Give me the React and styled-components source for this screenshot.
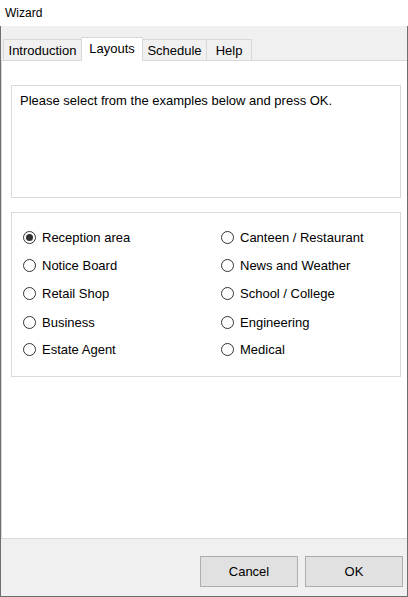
import React, { useState } from "react";
import styled, { createGlobalStyle } from "styled-components";

const Global = createGlobalStyle`
  html, body { margin: 0; padding: 0; background: #ffffff; }
  body { font-family: "Liberation Sans", Arial, sans-serif; font-size: 13px; color: #000; }
  * { box-sizing: border-box; }
`;

const Window = styled.div`
  width: 408px;
  height: 597px;
  display: flex;
  flex-direction: column;
  background: #fff;
`;

const TitleBar = styled.div`
  height: 26px;
  display: flex;
  align-items: center;
  padding-left: 5px;
  font-size: 12px;
  background: #fff;
`;

const Body = styled.div`
  flex: 1;
  display: flex;
  flex-direction: column;
  background: #f0f0f0;
  border: 1px solid #6e6e6e;
  border-top: none;
`;

const TabStrip = styled.div`
  height: 34px;
  display: flex;
  align-items: flex-end;
  padding-left: 2px;
`;

const Tab = styled.div`
  position: relative;
  width: ${(p) => p.$w}px;
  height: ${(p) => (p.$active ? 24 : 21)}px;
  margin-bottom: ${(p) => (p.$active ? -1 : 0)}px;
  margin-left: ${(p) => (p.$first ? 0 : -1)}px;
  z-index: ${(p) => (p.$active ? 2 : 1)};
  display: flex;
  justify-content: center;
  align-items: ${(p) => (p.$active ? "flex-start" : "center")};
  padding-top: ${(p) => (p.$active ? 3 : 1)}px;
  background: ${(p) => (p.$active ? "#fff" : "#f0f0f0")};
  border: 1px solid #d9d9d9;
  border-bottom: none;
  white-space: nowrap;
  cursor: default;
`;

const Panel = styled.div`
  height: 479px;
  background: #fff;
  border: 1px solid #d9d9d9;
  border-right: none;
  padding: 24px 0 0 9px;
  display: flex;
  flex-direction: column;
  gap: 14px;
`;

const Box = styled.div`
  width: 390px;
  border: 1px solid #dadada;
  background: #fff;
`;

const Description = styled(Box)`
  height: 113px;
  padding: 7px 8px;
  line-height: 15px;
`;

const RadioGrid = styled(Box)`
  display: grid;
  grid-template-columns: 198px 1fr;
  grid-template-rows: 28px 28px 29px 28px 26px;
  grid-auto-flow: column;
  align-items: center;
  padding: 10px 0 14px 11px;
`;

const Option = styled.label`
  display: flex;
  align-items: center;
  gap: 6px;
  line-height: 15px;
  cursor: default;
`;

const Circle = styled.span`
  width: 13px;
  height: 13px;
  border-radius: 50%;
  border: 1px solid #333;
  background: #fff;
  display: flex;
  align-items: center;
  justify-content: center;
  flex: none;
  &::after {
    content: "";
    width: 7px;
    height: 7px;
    border-radius: 50%;
    background: ${(p) => (p.$checked ? "#333" : "transparent")};
  }
`;

const Footer = styled.div`
  flex: 1;
  display: flex;
  justify-content: flex-end;
  align-items: flex-start;
  gap: 7px;
  padding: 17px 4px 0 0;
`;

const Button = styled.button`
  width: 98px;
  height: 31px;
  background: #e1e1e1;
  border: 1px solid #adadad;
  font-family: "Liberation Sans", Arial, sans-serif;
  font-size: 13px;
  color: #000;
  padding: 0;
`;

const options = [
  "Reception area",
  "Notice Board",
  "Retail Shop",
  "Business",
  "Estate Agent",
  "Canteen / Restaurant",
  "News and Weather",
  "School / College",
  "Engineering",
  "Medical",
];

const tabs = [
  { label: "Introduction", w: 79 },
  { label: "Layouts", w: 62, active: true },
  { label: "Schedule", w: 65 },
  { label: "Help", w: 46 },
];

export default function App() {
  const [sel, setSel] = useState("Reception area");
  return (
    <>
      <Global />
      <Window>
        <TitleBar>Wizard</TitleBar>
        <Body>
          <TabStrip>
            {tabs.map((t, i) => (
              <Tab key={t.label} $w={t.w} $active={t.active} $first={i === 0}>
                {t.label}
              </Tab>
            ))}
          </TabStrip>
          <Panel>
            <Description>Please select from the examples below and press OK.</Description>
            <RadioGrid>
              {options.map((o) => (
                <Option key={o} onClick={() => setSel(o)}>
                  <Circle $checked={sel === o} />
                  {o}
                </Option>
              ))}
            </RadioGrid>
          </Panel>
          <Footer>
            <Button>Cancel</Button>
            <Button>OK</Button>
          </Footer>
        </Body>
      </Window>
    </>
  );
}
